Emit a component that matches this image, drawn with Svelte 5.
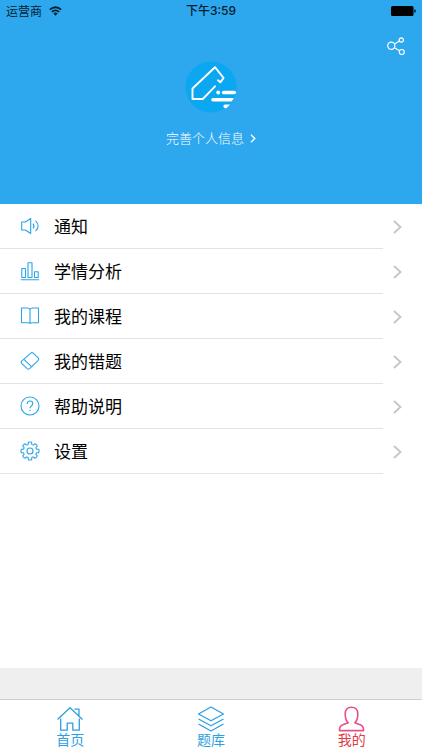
<script lang="ts">
  const rows = [
    { id: "notice", label: "通知" },
    { id: "stats", label: "学情分析" },
    { id: "course", label: "我的课程" },
    { id: "wrong", label: "我的错题" },
    { id: "help", label: "帮助说明" },
    { id: "settings", label: "设置" },
  ];

  const tabs = [
    { id: "home", label: "首页" },
    { id: "bank", label: "题库" },
    { id: "mine", label: "我的" },
  ];

  let active = $state("mine");

  // outline of the settings gear: eight teeth around the centre
  const gear = Array.from({ length: 8 }, (_, i) => {
    const pt = (r: number, deg: number) => {
      const a = ((i * 45 + deg) * Math.PI) / 180;
      return `${(10 + r * Math.cos(a)).toFixed(2)} ${(10 + r * Math.sin(a)).toFixed(2)}`;
    };
    return `${i ? "L" : "M"}${pt(7, -14)}L${pt(8.8, -11)}Q${pt(9.4, 0)} ${pt(8.8, 11)}L${pt(7, 14)}Q${pt(6.2, 22.5)} ${pt(7, 31)}`;
  }).join("") + "Z";
</script>

<div class="page">
  <header>
    <div class="status">
      <span class="carrier">
        运营商
        <svg width="13" height="10" viewBox="0 0 13 10" aria-hidden="true">
          <path d="M.8 3.6Q6.5 -1.2 12.2 3.6M2.8 5.9Q6.5 2.9 10.2 5.9" fill="none" stroke="#04202f" stroke-width="1.8" />
          <path d="M4.3 7.3Q6.5 5.6 8.7 7.3L6.5 9.7Z" fill="#04202f" />
        </svg>
      </span>
      <span class="time">下午3:59</span>
      <span class="battery">
        <svg width="25" height="10" viewBox="0 0 25 10" aria-hidden="true">
          <rect width="22.5" height="10" rx="1.5" />
          <path d="M23.3 3.3Q24.8 3.5 24.8 5T23.3 6.7Z" />
        </svg>
      </span>
    </div>
    <div class="tools">
      <button class="share" aria-label="分享">
        <svg width="18" height="18" viewBox="0 0 18 18">
          <circle cx="4.3" cy="8.8" r="3.6" />
          <circle cx="14.3" cy="3" r="2.1" />
          <circle cx="14.8" cy="15" r="2.5" />
          <path d="M7.4 7L12.5 4M7.3 10.7L12.7 13.7" />
        </svg>
      </button>
    </div>
    <button class="profile">
      <svg class="avatar" width="52" height="52" viewBox="0 0 52 52" aria-hidden="true">
        <circle cx="26" cy="26" r="25.5" fill="#0ca7f1" />
        <path
          d="M33 19.3L35.3 21.3L38.6 17L30 6.2L7.5 27.5V38H17.8L30 25.3"
          fill="none" stroke="#fff" stroke-width="1.9" stroke-linejoin="round" stroke-linecap="round"
        />
        <circle cx="33.2" cy="31.5" r="1.9" fill="#fff" />
        <path d="M38.6 31.5H49.3" stroke="#fff" stroke-width="3.6" stroke-linecap="round" />
        <path d="M28 37H48.8Q47.8 39.1 46.4 40.6H28A1.8 1.8 0 0 1 28 37Z" fill="#fff" />
        <path d="M40 43.4H45Q43.4 45.6 40.7 47.4Q38.3 46.6 38.3 45.2Q38.4 43.5 40 43.4Z" fill="#fff" />
      </svg>
      <span class="hint">
        完善个人信息
        <svg width="6" height="9" viewBox="0 0 6 9" aria-hidden="true">
          <path d="M1 .8L4.8 4.5L1 8.2" fill="none" stroke="#fff" stroke-width="1.4" />
        </svg>
      </span>
    </button>
  </header>

  <main>
    {#each rows as row (row.id)}
      <a class="row" href={"#" + row.id}>
        <span class="cell">
          <svg class="icon" width="20" height="20" viewBox="0 0 20 20" aria-hidden="true">
            {#if row.id === "notice"}
              <path d="M1.7 6H5.3L10.7 2.5V17.5L5.3 14H1.7Z" />
              <path d="M13 7.6Q15 10 13 12.4M15.5 4.8Q20.8 10 15.5 15.2" />
            {:else if row.id === "stats"}
              <path d="M1.8 7.5H5.5V16.5H1.8ZM8 1.8H12V16.5H8ZM14.5 10.8H18.2V16.5H14.5ZM.8 18.7H19.2" />
            {:else if row.id === "course"}
              <path d="M10 3.5Q9.5 2 7.5 2H1.5V16.8H8.3Q9.5 16.8 10 17.5Q10.5 16.8 11.7 16.8H18.5V2H12.5Q10.5 2 10 3.5V17.5" />
            {:else if row.id === "wrong"}
              <path d="M10.8 2.1Q12 1 13.2 2.1L18.2 6.9Q19.3 8.1 18.2 9.3L9.6 17.7Q8.4 18.8 7.2 17.7L1.6 12.3Q.6 11.1 1.6 10.2ZM3.9 8.4L11.6 15.7" />
            {:else if row.id === "help"}
              <circle cx="10" cy="10" r="9" />
              <path d="M7.2 8Q7.2 5 10 5T12.8 7.6Q12.8 9 11.3 10Q10 10.9 10 12.2" />
              <path d="M10 13.8V15" />
            {:else}
              <path d={gear} />
              <circle cx="10" cy="10" r="3" />
            {/if}
          </svg>
          {row.label}
        </span>
        <svg class="arrow" width="9" height="14" viewBox="0 0 9 14" aria-hidden="true">
          <path d="M1 1L7.5 7L1 13" />
        </svg>
      </a>
    {/each}
  </main>

  <div class="spacer"></div>

  <nav>
    {#each tabs as tab (tab.id)}
      <button class="tab" class:active={active === tab.id} onclick={() => (active = tab.id)}>
        <svg width="28" height="26" viewBox="0 0 28 26" aria-hidden="true">
          {#if tab.id === "home"}
            <path d="M1.5 13.5L14 1.8L26.5 13.5M18.5 3.2H23V9.5M4.7 12.5V24.2H11.2V17.2H16.8V24.2H23.3V12.5" />
          {:else if tab.id === "bank"}
            <path d="M14 1L26.5 8L14 14.8L1.5 8ZM1.5 13L14 19.8L26.5 13M1.5 18L14 25L26.5 18" />
          {:else}
            <path
              d="M10.2 16.8C8.2 15 7.2 12 7.2 7.9C7.2 3 9.6 1.2 13.5 1.2S19.8 3 19.8 7.9C19.8 12 18.8 15 16.8 16.8L22.8 18.9Q25.6 20.2 25.6 24.6H1.4Q1.4 20.2 4.2 18.9Z"
            />
          {/if}
        </svg>
        {tab.label}
      </button>
    {/each}
  </nav>
</div>

<style>
  :global(body) {
    margin: 0;
  }
  .page {
    min-height: 100vh;
    display: flex;
    flex-direction: column;
    background: #fff;
    font-family: "Noto Sans CJK SC", sans-serif;
  }
  button {
    margin: 0;
    padding: 0;
    border: 0;
    background: none;
    font: inherit;
    cursor: pointer;
  }
  svg {
    display: block;
  }
  header {
    box-sizing: border-box;
    padding-bottom: 56px;
    background: #2da7ee;
  }
  .status {
    display: grid;
    grid-template-columns: 1fr auto 1fr;
    align-items: center;
    height: 22px;
    padding: 0 6px;
    font-size: 12px;
    line-height: 22px;
    color: #04202f;
  }
  .carrier {
    display: flex;
    align-items: center;
    gap: 7px;
  }
  .time {
    font-family: Inter, "Noto Sans CJK SC", sans-serif;
    font-weight: 500;
  }
  .battery {
    justify-self: end;
  }
  .tools {
    display: flex;
    justify-content: flex-end;
    padding: 15px 17px 0;
  }
  .share svg {
    fill: none;
    stroke: #fff;
    stroke-width: 1.2;
  }
  .profile {
    display: flex;
    flex-direction: column;
    align-items: center;
    gap: 15px;
    width: 100%;
    margin-top: 6px;
  }
  .hint {
    display: flex;
    align-items: center;
    gap: 6px;
    font-size: 13px;
    font-weight: 300;
    line-height: 20px;
    color: #fff;
  }
  .row {
    display: flex;
    align-items: center;
    gap: 10px;
    padding-right: 20px;
    color: #000;
    text-decoration: none;
  }
  .cell {
    flex: 1;
    display: flex;
    align-items: center;
    gap: 14px;
    height: 44px;
    padding-left: 20px;
    border-bottom: 1px solid #e3e3e5;
    font-size: 17px;
    line-height: 44px;
  }
  .icon {
    fill: none;
    stroke: #2ba5e6;
    stroke-width: 1.1;
    stroke-linejoin: round;
  }
  .arrow {
    fill: none;
    stroke: #c4c4c9;
    stroke-width: 1.8;
  }
  .spacer {
    height: 31px;
    margin-top: auto;
    background: #efeff0;
  }
  nav {
    display: flex;
    border-top: 1px solid #cfcfd0;
    background: #fff;
  }
  .tab {
    flex: 1;
    display: flex;
    flex-direction: column;
    align-items: center;
    height: 50px;
    padding-top: 6px;
    font-size: 14px;
    line-height: 14px;
    color: #2ba1e3;
  }
  .tab svg {
    fill: none;
    stroke: #2ba1e3;
    stroke-width: 1.3;
    stroke-linejoin: round;
  }
  .tab.active {
    color: #e03a45;
  }
  .tab.active svg {
    stroke: #e8508a;
    stroke-width: 1.6;
  }
</style>
